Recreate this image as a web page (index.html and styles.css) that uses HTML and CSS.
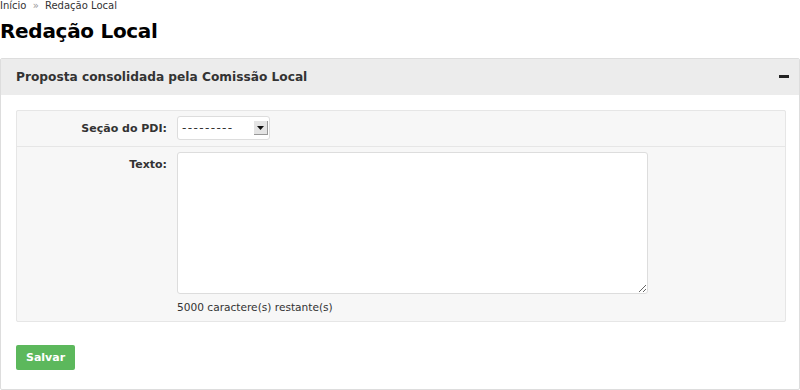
FILE: index.html
```html
<!DOCTYPE html>
<html>

<head>
    <title>Redação Local</title>
    <meta charset="utf-8">
    <link rel="stylesheet" href="styles.css">
</head>

<body>
    <div class="breadcrumb">
        <a href="#">Início</a>
        <span class="sep">»</span>
        <span>Redação Local</span>
    </div>

    <h1 class="page-title">Redação Local</h1>

    <div class="panel">
        <div class="panel-heading">
            <span class="panel-title">Proposta consolidada pela Comissão Local</span>
            <span class="collapse-icon"></span>
        </div>
        <div class="panel-body">
            <form>
                <fieldset class="module">
                    <div class="form-row">
                        <label class="form-label" for="secao">Seção do PDI:</label>
                        <div class="form-field">
                            <div class="fake-select" id="secao">
                                <span class="select-value">---------</span>
                                <span class="select-arrow">
                                    <svg width="7" height="4" viewBox="0 0 7 4"><path d="M0 0h7L3.5 4z" fill="#111"/></svg>
                                </span>
                            </div>
                        </div>
                    </div>
                    <div class="form-row">
                        <label class="form-label" for="texto">Texto:</label>
                        <div class="form-field">
                            <textarea id="texto"></textarea>
                            <div class="help-text">5000 caractere(s) restante(s)</div>
                        </div>
                    </div>
                </fieldset>
                <div class="submit-row">
                    <button type="button" class="btn-success">Salvar</button>
                </div>
            </form>
        </div>
    </div>
</body>

</html>
```

FILE: styles.css
```css
body {
    margin: 0;
    padding: 0;
    font-family: "DejaVu Sans", Verdana, sans-serif;
    color: #333;
    background-color: #fff;
}

.breadcrumb {
    font-size: 10px;
    line-height: 12px;
    color: #333;
}

.breadcrumb a {
    color: #333;
    text-decoration: none;
}

.breadcrumb .sep {
    color: #999;
    margin: 0 3px;
}

.page-title {
    margin: 4px 0 0 0;
    font-size: 20px;
    line-height: 30px;
    color: #000;
    letter-spacing: -0.3px;
}

.panel {
    margin-top: 12px;
    border: 1px solid #ddd;
    border-radius: 2px;
    background-color: #fff;
}

.panel-heading {
    display: flex;
    align-items: center;
    justify-content: space-between;
    height: 36px;
    padding: 0 10px 0 15px;
    background-color: #ececec;
}

.panel-title {
    font-size: 12.2px;
    font-weight: bold;
    color: #333;
}

.collapse-icon {
    width: 10px;
    height: 3px;
    background-color: #222;
    margin-bottom: 2px;
}

.panel-body {
    padding: 15px 13px 19px 15px;
}

.module {
    margin: 0;
    padding: 0;
    border: 1px solid #e6e6e6;
    border-radius: 2px;
    background-color: #f7f7f7;
}

.form-row {
    display: flex;
    padding: 5px 0 6px 0;
    border-bottom: 1px solid #e6e6e6;
}

.form-row:last-child {
    border-bottom: none;
    padding-bottom: 8px;
}

.form-label {
    width: 150px;
    text-align: right;
    font-size: 11px;
    font-weight: bold;
    color: #333;
    padding-top: 6px;
}

.form-field {
    margin-left: 10px;
}

.fake-select {
    display: flex;
    align-items: center;
    justify-content: space-between;
    width: 91px;
    height: 22px;
    border: 1px solid #ddd;
    border-radius: 3px;
    background-color: #fff;
}

.select-value {
    font-size: 12px;
    color: #333;
    padding-left: 4px;
    letter-spacing: 1.4px;
}

.select-arrow {
    display: flex;
    align-items: center;
    justify-content: center;
    width: 13px;
    height: 13px;
    margin-right: 1px;
    background-color: #e4e4e4;
    border-right: 1px solid #999;
    border-bottom: 1px solid #999;
}

textarea {
    display: block;
    box-sizing: border-box;
    width: 471px;
    height: 142px;
    margin: 0;
    border: 1px solid #ddd;
    border-radius: 3px;
    background-color: #fff;
    resize: both;
    font-family: inherit;
}

.help-text {
    margin-top: 7px;
    font-size: 10.6px;
    color: #333;
}

.submit-row {
    margin-top: 23px;
}

.btn-success {
    padding: 0 10px;
    height: 25px;
    border: none;
    border-radius: 2px;
    background-color: #5cb85c;
    color: #fff;
    font-family: inherit;
    font-size: 11px;
    font-weight: bold;
    cursor: pointer;
}
```
